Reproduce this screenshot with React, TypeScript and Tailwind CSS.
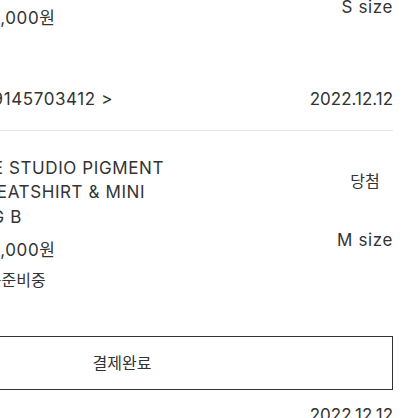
import React from "react";

type Order = {
    title: string[];
    price: string;
    status?: string;
    badge?: string;
    size: string;
    orderNo?: string;
    date: string;
    action?: string;
};

const orders: Order[] = [
    {
        title: ["LOGO BASIC HOODIE", "ZIP-UP JACKET GRAY", "TYPE A"],
        price: "129,000원",
        badge: "당첨",
        size: "S size",
        orderNo: "19145703412 >",
        date: "2022.12.12",
    },
    {
        title: ["THE STUDIO PIGMENT", "SWEATSHIRT & MINI", "BAG B"],
        price: "129,000원",
        status: "배송준비중",
        badge: "당첨",
        size: "M size",
        date: "2022.12.12",
        action: "결제완료",
    },
    {
        title: ["THE STUDIO PIGMENT", "SWEATSHIRT", "BAG C"],
        price: "129,000원",
        badge: "당첨",
        size: "L size",
        orderNo: "19145703413 >",
        date: "2022.12.12",
    },
];

function OrderItem({ order }: { order: Order }) {
    return (
        <div className="border-b border-[#e6e6ec]">
            <div className="flex pt-[25px]">
                {/* 썸네일 (화면 밖) */}
                <div className="w-[100px] h-[100px] bg-[#f2f2f2] shrink-0 mr-[17px]" />
                <div className="flex-1 min-w-0 tracking-[0.6px]">
                    {order.title.map((line, i) => (
                        <div key={i} className="leading-[24.5px] whitespace-nowrap">
                            {line}
                        </div>
                    ))}
                    <div className="mt-[6px] leading-[30px] pl-[3px]">{order.price}</div>
                    {order.status && (
                        <div className="leading-[30px] text-[16px] tracking-normal pl-[4px]">{order.status}</div>
                    )}
                </div>
                <div className="flex flex-col items-center">
                    {order.badge && <div className="mt-[13px] leading-[24px] text-[16px]">{order.badge}</div>}
                    <div className="mt-[35px] leading-[24px] whitespace-nowrap tracking-[0.6px]">{order.size}</div>
                </div>
            </div>
            {order.action ? (
                <div className="mt-[40.5px] h-[54px] border-[1.5px] border-[#333] flex items-center justify-center text-[16px]">
                    {order.action}
                </div>
            ) : (
                <div className="h-[24px]" />
            )}
            <div
                className={`flex justify-between leading-[24px] pl-[134px] mb-[19px] ${
                    order.action ? "mt-[13px]" : "mt-[30px]"
                }`}
            >
                <span className="tracking-[0.6px]">{order.orderNo ?? ""}</span>
                <span>{order.date}</span>
            </div>
        </div>
    );
}

export default function App() {
    return (
        <div
            className="w-[418px] h-[418px] overflow-hidden bg-white text-[17px] text-[#333]"
            style={{ fontFamily: 'Inter, "Noto Sans CJK KR", sans-serif' }}
        >
            <div className="-mt-[102px] -ml-[149px] w-[542px]">
                {orders.map((o, i) => (
                    <OrderItem key={i} order={o} />
                ))}
            </div>
        </div>
    );
}
